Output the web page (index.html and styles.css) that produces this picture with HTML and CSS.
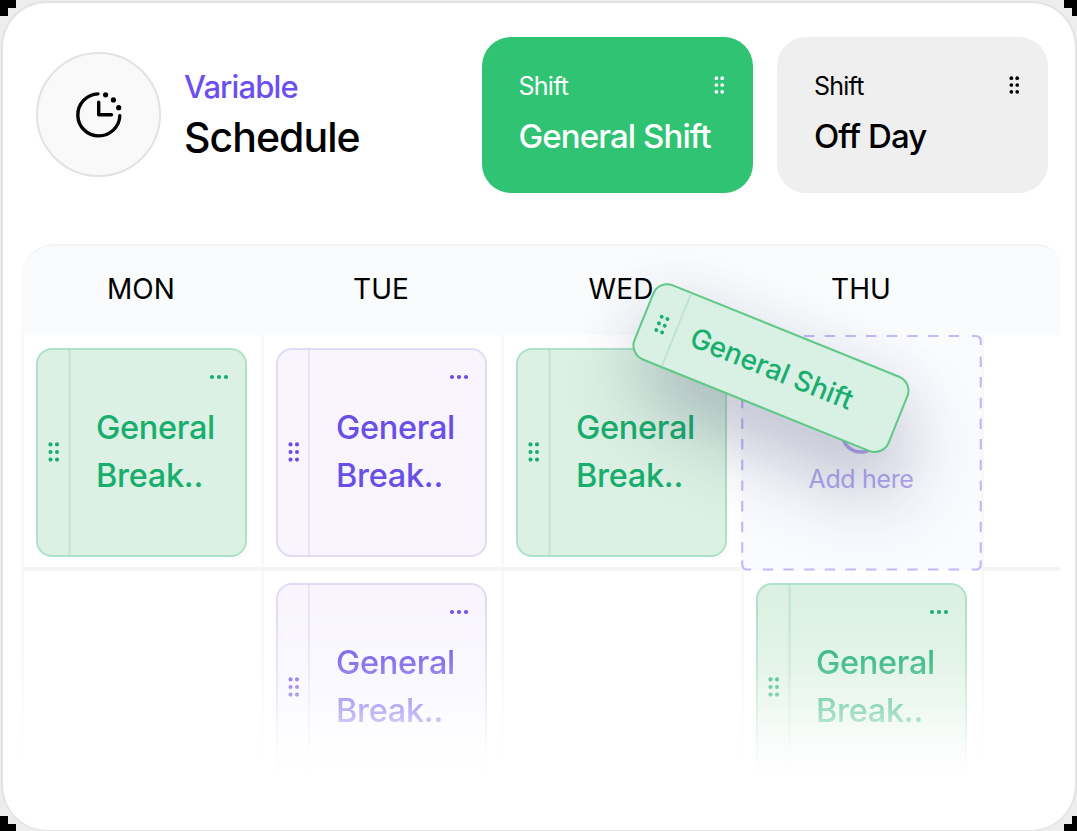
FILE: index.html
```
<!DOCTYPE html>
<html lang="en">
<head>
<meta charset="utf-8">
<title>Variable Schedule</title>
<link rel="stylesheet" href="styles.css">
</head>
<body>
<svg class="defs" width="0" height="0">
  <symbol id="grip" viewBox="0 0 12 20">
    <circle cx="2.5" cy="2.4" r="2.05"/><circle cx="9" cy="2.4" r="2.05"/>
    <circle cx="2.5" cy="10" r="2.05"/><circle cx="9" cy="10" r="2.05"/>
    <circle cx="2.5" cy="17.6" r="2.05"/><circle cx="9" cy="17.6" r="2.05"/>
  </symbol>
  <symbol id="more" viewBox="0 0 20 6">
    <circle cx="3" cy="3" r="2.1"/><circle cx="10" cy="3" r="2.1"/><circle cx="17" cy="3" r="2.1"/>
  </symbol>
</svg>
<main class="panel">
  <header class="top">
    <div class="badge">
      <svg width="50" height="50" viewBox="0 0 50 50" fill="none" stroke="#000" stroke-width="3.4" stroke-linecap="round" stroke-linejoin="round">
        <path d="M24 3.9A21 21 0 1 0 45.8 25.700M24.700 12.300V24.700H37.500"/>
        <g fill="#000" stroke="none"><circle cx="31.600" cy="4.800" r="2.600"/><circle cx="39.400" cy="9.900" r="2.600"/><circle cx="44.700" cy="17.700" r="2.600"/></g>
      </svg>
    </div>
    <div class="title">
      <div class="kicker">Variable</div>
      <div class="name">Schedule</div>
    </div>
    <div class="shifts">
      <div class="shift shift-green">
        <div class="shift-head"><span>Shift</span><svg class="grip-s"><use href="#grip"/></svg></div>
        <div class="shift-name">General Shift</div>
      </div>
      <div class="shift">
        <div class="shift-head"><span>Shift</span><svg class="grip-s"><use href="#grip"/></svg></div>
        <div class="shift-name off">Off Day</div>
      </div>
    </div>
  </header>
  <section class="board">
    <div class="days"><div>MON</div><div>TUE</div><div>WED</div><div>THU</div></div>
    <div class="row">
      <div class="cell"><div class="task green"><div class="handle"><svg class="grip"><use href="#grip"/></svg></div><div class="task-body"><svg class="more"><use href="#more"/></svg><p>General<br>Break..</p></div></div></div>
      <div class="cell"><div class="task violet"><div class="handle"><svg class="grip"><use href="#grip"/></svg></div><div class="task-body"><svg class="more"><use href="#more"/></svg><p>General<br>Break..</p></div></div></div>
      <div class="cell"><div class="task green"><div class="handle"><svg class="grip"><use href="#grip"/></svg></div><div class="task-body"><svg class="more"><use href="#more"/></svg><p>General<br>Break..</p></div></div></div>
      <div class="drop">
        <svg class="dash" viewBox="0 0 241 236" fill="none" stroke="#c5b9f6" stroke-width="2.200">
          <path d="M1 10V6Q1 1 6 1H10M231 1H235Q240 1 240 6V10M240 226V230Q240 235 235 235H231M10 235H6Q1 235 1 230V226"/>
          <path stroke-dasharray="10.500 10.200" d="M21.500 1H225M21.500 235H225M1 21.500V220M240 21.500V220"/>
        </svg>
        <svg class="plus" width="42" height="42" viewBox="0 0 42 42" fill="none" stroke="#b5a9f3" stroke-width="3.500"><circle cx="21" cy="21" r="19"/><path d="M21 13V29M13 21H29"/></svg>
        <span>Add here</span>
      </div>
      <div class="cell rest"></div>
    </div>
    <div class="row fade">
      <div class="cell"></div>
      <div class="cell"><div class="task violet"><div class="handle"><svg class="grip"><use href="#grip"/></svg></div><div class="task-body"><svg class="more"><use href="#more"/></svg><p>General<br>Break..</p></div></div></div>
      <div class="cell"></div>
      <div class="cell"><div class="task green"><div class="handle"><svg class="grip"><use href="#grip"/></svg></div><div class="task-body"><svg class="more"><use href="#more"/></svg><p>General<br>Break..</p></div></div></div>
      <div class="cell rest"></div>
    </div>
  </section>
  <div class="dragged">
    <div class="drag-handle"><svg class="grip"><use href="#grip"/></svg></div>
    <div class="drag-label">General Shift</div>
  </div>
</main>
</body>
</html>
```
FILE: styles.css
```
* { box-sizing: border-box; }
body {
  margin: 0;
  width: 1077px;
  height: 831px;
  padding: 1px 0 1px 1px;
  overflow: hidden;
  font-family: Inter, "Liberation Sans", sans-serif;
  color: #000;
  background-color: #ededed;
  background-image:
    linear-gradient(#000, #000), linear-gradient(#000, #000),
    linear-gradient(#000, #000), linear-gradient(#000, #000),
    linear-gradient(#000, #000), linear-gradient(#000, #000),
    linear-gradient(#000, #000), linear-gradient(#000, #000);
  background-repeat: no-repeat;
  background-size: 16px 8px, 8px 16px, 13px 8px, 5px 16px, 16px 7px, 8px 15px, 13px 7px, 5px 15px;
  background-position: 0 0, 0 0, 100% 0, 100% 0, 0 100%, 0 100%, 100% 100%, 100% 100%;
}
.defs { position: absolute; }
svg { display: block; fill: currentColor; flex: none; }
.panel {
  position: relative;
  height: 830px;
  border: 2px solid #e3e3e3;
  border-width: 2px 2px 1px;
  border-radius: 46px;
  background: #fff;
  padding: 33.500px 0 0 18px;
}
.top { display: flex; height: 156px; padding-left: 15px; }
.badge {
  width: 125px;
  height: 125px;
  margin-top: 15.500px;
  border: 2px solid #e2e2e2;
  border-radius: 50%;
  background: #f9f9f9;
  display: flex;
  align-items: center;
  justify-content: center;
}
.badge svg { fill: none; }
.title { width: 298px; margin-left: 23px; padding-top: 30px; white-space: nowrap; }
.kicker { font-size: 31px; line-height: 40px; font-weight: 450; letter-spacing: -.9px; color: #6c4fee; }
.name { font-size: 41px; line-height: 50px; font-weight: 500; letter-spacing: -.95px; margin-top: 5px; }
.shifts { display: flex; gap: 24.400px; }
.shift {
  width: 271px;
  height: 156px;
  border-radius: 29px;
  background: #efefef;
  padding: 32px 28.500px 0 36.500px;
}
.shift-green { background: #30c373; color: #fff; }
.shift-head { display: flex; justify-content: space-between; font-size: 25px; line-height: 34px; letter-spacing: -.75px; }
.grip-s { width: 11px; height: 18px; margin-top: 7.500px; }
.shift-name { font-size: 33px; line-height: 42px; font-weight: 450; letter-spacing: -.9px; margin-top: 12.500px; white-space: nowrap; }
.board { width: 1039px; margin-top: 51px; }
.days {
  display: flex;
  height: 91.500px;
  padding-right: 79px;
  background: #f9fbfd;
  border-top: 2px solid #f3f4f6;
  border-radius: 34px 22px 0 0;
  font-size: 28px;
  line-height: 86px;
  letter-spacing: .1px;
  text-align: center;
}
.days div { flex: 1; }
.row { display: flex; height: 235.500px; }
.cell {
  width: 240px;
  flex: none;
  padding: 13px 0 0 11.500px;
  border-left: 3px solid #f8f8f8;
  border-bottom: 4px solid #f5f5f5;
}
.rest { width: 79px; }
.fade { -webkit-mask-image: linear-gradient(#000 14%, rgba(0,0,0,.8) 38%, rgba(0,0,0,.42) 60%, rgba(0,0,0,.14) 74%, transparent 90%); mask-image: linear-gradient(#000 14%, rgba(0,0,0,.8) 38%, rgba(0,0,0,.42) 60%, rgba(0,0,0,.14) 74%, transparent 90%); }
.fade .cell { border-bottom: 0; padding-top: 12.500px; }
.task {
  display: flex;
  width: 211px;
  height: 209px;
  border: 2px solid;
  border-radius: 16px;
}
.green { color: #18ae6e; background: #dcf1e3; border-color: #aee1c9; }
.violet { color: #6a4fe6; background: #f8f5ff; border-color: #e2daf5; }
.handle { width: 33px; border-right: 3px solid #c6e8d6; padding: 92px 0 0 10px; flex: none; }
.violet .handle { width: 32px; border-right: 2px solid #e9e2f8; }
.grip { width: 12px; height: 20px; }
.task-body { flex: 1; padding-top: 24px; }
.more { width: 20px; height: 6px; margin: 0 16px 0 auto; }
.task p { margin: 24px 0 0 25.500px; font-size: 32.500px; line-height: 48px; font-weight: 450; letter-spacing: -.3px; white-space: nowrap; }
.task.violet p { margin-left: 26.500px; }
.drop {
  position: relative;
  width: 240px;
  flex: none;
  display: flex;
  flex-direction: column;
  align-items: center;
  padding-top: 77px;
  background: #fafbff;
  color: #b5a9f3;
  font-size: 25px;
  line-height: 34px;
  letter-spacing: -.35px;
}
.dash { position: absolute; left: 0; top: -.5px; width: 241px; height: 235.500px; fill: none; overflow: visible; }
.plus { fill: none; }
.drop span { margin-top: 8px; }
.dragged {
  position: absolute;
  left: 630px;
  top: 323.500px;
  width: 275.500px;
  height: 82px;
  display: flex;
  border: 2px solid #60c886;
  border-radius: 16px;
  background: #d9f1e5;
  color: #18ae6e;
  transform: rotate(22deg);
  box-shadow: 22px 42px 76px 0 rgba(44,52,90,.25), 0 6px 60px rgba(60,70,110,.09);
}
.drag-handle { width: 35px; flex: none; border-right: 2px solid #bfe5d0; padding: 30px 0 0 13px; }
.drag-handle .grip { width: 11.500px; height: 19px; }
.drag-label { padding-left: 15.500px; font-size: 28px; line-height: 78px; font-weight: 450; letter-spacing: 0; white-space: nowrap; }
```
